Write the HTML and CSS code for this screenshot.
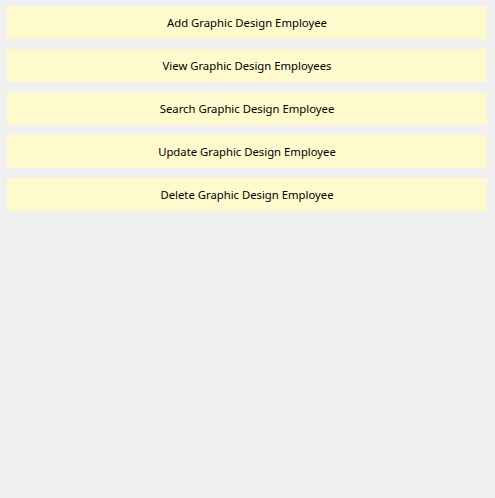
FILE: index.html
```html
<!DOCTYPE html>
<html>
<head>
<meta charset="utf-8">
<link rel="stylesheet" href="styles.css">
</head>
<body>
<div class="menu">
  <button class="btn">Add Graphic Design Employee</button>
  <button class="btn">View Graphic Design Employees</button>
  <button class="btn">Search Graphic Design Employee</button>
  <button class="btn">Update Graphic Design Employee</button>
  <button class="btn">Delete Graphic Design Employee</button>
</div>
</body>
</html>
```
FILE: styles.css
```css
html, body {
  margin: 0;
  padding: 0;
  background: #f0f0f0;
  width: 495px;
  height: 498px;
  overflow: hidden;
}
.menu {
  display: flex;
  flex-direction: column;
  gap: 10px;
  padding: 6px 8px 0 7px;
}
.btn {
  width: 480px;
  height: 33px;
  margin: 0;
  padding: 0;
  border: none;
  background: #fffacd;
  color: #000;
  font-family: "Noto Sans", "Open Sans", sans-serif;
  font-size: 11.3px;
  text-align: center;
}
```
